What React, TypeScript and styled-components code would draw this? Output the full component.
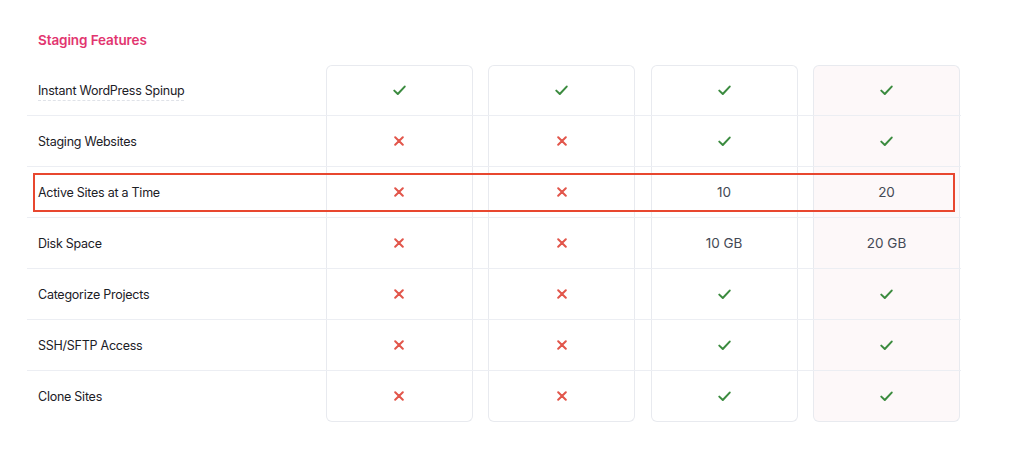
import React from "react";
import styled, { createGlobalStyle } from "styled-components";

const Global = createGlobalStyle`
  html, body { margin: 0; padding: 0; background: #ffffff; }
  body { font-family: Inter, "Open Sans", sans-serif; }
`;

const Page = styled.div`
  width: 1024px;
  height: 456px;
  box-sizing: border-box;
  padding: 30px 0 0 27px;
  background: #fff;
`;

const Title = styled.h2`
  margin: 0 0 0 11px;
  height: 20px;
  line-height: 20px;
  font-size: 13.5px;
  font-weight: 600;
  color: #e2356f;
  letter-spacing: -0.1px;
`;

const Table = styled.div`
  margin-top: 15px;
  width: 934px;
  display: flex;
  flex-direction: column;
`;

const Row = styled.div<{ $last?: boolean }>`
  position: relative;
  display: grid;
  grid-template-columns: 283px repeat(4, 147px);
  column-gap: 15.5px;
  height: ${(p) => (p.$last ? "51px" : "50px")};
  border-bottom: ${(p) => (p.$last ? "none" : "1px solid #eceef3")};
`;

const Label = styled.div`
  display: flex;
  align-items: center;
  padding-left: 11px;
  font-size: 12.5px;
  letter-spacing: -0.25px;
  color: #1c2026;
`;

const Dotted = styled.span`
  border-bottom: 1px dashed #dfe2e8;
  padding-bottom: 2px;
  margin-top: 3px;
`;

const Cell = styled.div<{ $first?: boolean; $last?: boolean; $featured?: boolean }>`
  box-sizing: border-box;
  display: flex;
  align-items: center;
  justify-content: center;
  border-left: 1px solid #e8eaef;
  border-right: 1px solid #e8eaef;
  border-top: ${(p) => (p.$first ? "1px solid #e8eaef" : "none")};
  border-bottom: ${(p) => (p.$last ? "1px solid #e8eaef" : "none")};
  border-radius: ${(p) => (p.$first ? "6px 6px 0 0" : p.$last ? "0 0 6px 6px" : "0")};
  background: ${(p) => (p.$featured ? "#fdf8f9" : "#ffffff")};
  font-size: 13.5px;
  color: #444955;
`;

const Highlight = styled.div`
  position: absolute;
  left: 6px;
  top: 6px;
  width: 922px;
  height: 39px;
  box-sizing: border-box;
  border: 2px solid #e8472f;
  pointer-events: none;
`;

const Check = () => (
  <svg width="13" height="11" viewBox="0 0 13 11" fill="none">
    <path d="M1.3 5.6 L4.8 9 L11.7 1.6" stroke="#3b8b3f" strokeWidth="2" strokeLinecap="round" strokeLinejoin="round" />
  </svg>
);

const Cross = () => (
  <svg width="10" height="10" viewBox="0 0 10 10" fill="none">
    <path d="M1.2 1.2 L8.8 8.8 M8.8 1.2 L1.2 8.8" stroke="#e2564b" strokeWidth="2" strokeLinecap="round" />
  </svg>
);

type V = boolean | string;
const rows: { label: string; vals: V[]; dotted?: boolean; hl?: boolean }[] = [
  { label: "Instant WordPress Spinup", vals: [true, true, true, true], dotted: true },
  { label: "Staging Websites", vals: [false, false, true, true] },
  { label: "Active Sites at a Time", vals: [false, false, "10", "20"], hl: true },
  { label: "Disk Space", vals: [false, false, "10 GB", "20 GB"] },
  { label: "Categorize Projects", vals: [false, false, true, true] },
  { label: "SSH/SFTP Access", vals: [false, false, true, true] },
  { label: "Clone Sites", vals: [false, false, true, true] },
];

export default function App() {
  return (
    <Page>
      <Global />
      <Title>Staging Features</Title>
      <Table>
        {rows.map((r, i) => {
          const first = i === 0;
          const last = i === rows.length - 1;
          return (
            <Row key={r.label} $last={last}>
              <Label>{r.dotted ? <Dotted>{r.label}</Dotted> : r.label}</Label>
              {r.vals.map((v, j) => (
                <Cell key={j} $first={first} $last={last} $featured={j === 3}>
                  {v === true ? <Check /> : v === false ? <Cross /> : v}
                </Cell>
              ))}
              {r.hl && <Highlight />}
            </Row>
          );
        })}
      </Table>
    </Page>
  );
}
